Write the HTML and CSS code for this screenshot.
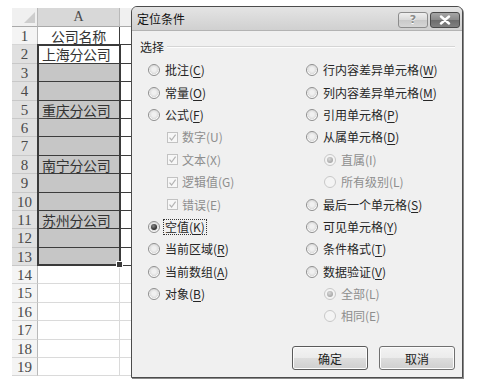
FILE: index.html
```html
<!DOCTYPE html>
<html lang="zh-CN">
<head>
<meta charset="utf-8">
<title>定位条件</title>
<link rel="stylesheet" href="styles.css">
</head>
<body>
<div class="screen">
  <div class="sheet">
    <div class="row hdr">
      <div class="rh corner"><i class="tri"></i></div>
      <div class="c a ch sel">A</div>
      <div class="c b ch"></div>
    </div>
    <div class="row"><div class="rh">1</div><div class="c a t center">公司名称</div><div class="c b t"></div></div>
    <div class="row"><div class="rh sel">2</div><div class="c a t">上海分公司</div><div class="c b t"></div></div>
    <div class="row"><div class="rh sel">3</div><div class="c a t fill"></div><div class="c b t"></div></div>
    <div class="row"><div class="rh sel">4</div><div class="c a t fill"></div><div class="c b t"></div></div>
    <div class="row"><div class="rh sel">5</div><div class="c a t fill">重庆分公司</div><div class="c b t"></div></div>
    <div class="row"><div class="rh sel">6</div><div class="c a t fill"></div><div class="c b t"></div></div>
    <div class="row"><div class="rh sel">7</div><div class="c a t fill"></div><div class="c b t"></div></div>
    <div class="row"><div class="rh sel">8</div><div class="c a t fill">南宁分公司</div><div class="c b t"></div></div>
    <div class="row"><div class="rh sel">9</div><div class="c a t fill"></div><div class="c b t"></div></div>
    <div class="row"><div class="rh sel">10</div><div class="c a t fill"></div><div class="c b t"></div></div>
    <div class="row"><div class="rh sel">11</div><div class="c a t fill">苏州分公司</div><div class="c b t"></div></div>
    <div class="row"><div class="rh sel">12</div><div class="c a t fill"></div><div class="c b t"></div></div>
    <div class="row"><div class="rh sel">13</div><div class="c a t fill"></div><div class="c b t"></div></div>
    <div class="row"><div class="rh">14</div><div class="c a"></div><div class="c b"></div></div>
    <div class="row"><div class="rh">15</div><div class="c a"></div><div class="c b"></div></div>
    <div class="row"><div class="rh">16</div><div class="c a"></div><div class="c b"></div></div>
    <div class="row"><div class="rh">17</div><div class="c a"></div><div class="c b"></div></div>
    <div class="row"><div class="rh">18</div><div class="c a"></div><div class="c b"></div></div>
    <div class="row"><div class="rh">19</div><div class="c a"></div><div class="c b"></div></div>
    <div class="selection"><i class="handle"></i></div>
  </div>

  <div class="dialog">
    <div class="titlebar">
      <span class="title">定位条件</span>
      <div class="tb-btns">
        <span class="tb help">?</span>
        <span class="tb close"><svg width="12" height="10" viewBox="0 0 12 10"><path d="M2 1.5 L10 8.5 M10 1.5 L2 8.5" stroke="#fff" stroke-width="2.4" stroke-linecap="round"/></svg></span>
      </div>
    </div>
    <div class="body">
      <div class="group-head"><span>选择</span><i class="rule"></i></div>
      <div class="options">
        <div class="col">
          <div class="opt"><i class="radio"></i><span>批注(<u>C</u>)</span></div>
          <div class="opt"><i class="radio"></i><span>常量(<u>O</u>)</span></div>
          <div class="opt"><i class="radio"></i><span>公式(<u>F</u>)</span></div>
          <div class="opt sub-chk dis"><i class="chk"><svg width="9" height="9" viewBox="0 0 9 9"><path d="M1.5 4.6 L3.6 7 L7.6 1.6" fill="none" stroke="#b4b4b4" stroke-width="1.2"/></svg></i><span>数字(U)</span></div>
          <div class="opt sub-chk dis"><i class="chk"><svg width="9" height="9" viewBox="0 0 9 9"><path d="M1.5 4.6 L3.6 7 L7.6 1.6" fill="none" stroke="#b4b4b4" stroke-width="1.2"/></svg></i><span>文本(X)</span></div>
          <div class="opt sub-chk dis"><i class="chk"><svg width="9" height="9" viewBox="0 0 9 9"><path d="M1.5 4.6 L3.6 7 L7.6 1.6" fill="none" stroke="#b4b4b4" stroke-width="1.2"/></svg></i><span>逻辑值(G)</span></div>
          <div class="opt sub-chk dis"><i class="chk"><svg width="9" height="9" viewBox="0 0 9 9"><path d="M1.5 4.6 L3.6 7 L7.6 1.6" fill="none" stroke="#b4b4b4" stroke-width="1.2"/></svg></i><span>错误(E)</span></div>
          <div class="opt"><i class="radio on"></i><span class="focus">空值(<u>K</u>)</span></div>
          <div class="opt"><i class="radio"></i><span>当前区域(<u>R</u>)</span></div>
          <div class="opt"><i class="radio"></i><span>当前数组(<u>A</u>)</span></div>
          <div class="opt"><i class="radio"></i><span>对象(<u>B</u>)</span></div>
        </div>
        <div class="col">
          <div class="opt"><i class="radio"></i><span>行内容差异单元格(<u>W</u>)</span></div>
          <div class="opt"><i class="radio"></i><span>列内容差异单元格(<u>M</u>)</span></div>
          <div class="opt"><i class="radio"></i><span>引用单元格(<u>P</u>)</span></div>
          <div class="opt"><i class="radio"></i><span>从属单元格(<u>D</u>)</span></div>
          <div class="opt sub-rad dis"><i class="radio on"></i><span>直属(I)</span></div>
          <div class="opt sub-rad dis"><i class="radio"></i><span>所有级别(L)</span></div>
          <div class="opt"><i class="radio"></i><span>最后一个单元格(<u>S</u>)</span></div>
          <div class="opt"><i class="radio"></i><span>可见单元格(<u>Y</u>)</span></div>
          <div class="opt"><i class="radio"></i><span>条件格式(<u>T</u>)</span></div>
          <div class="opt"><i class="radio"></i><span>数据验证(<u>V</u>)</span></div>
          <div class="opt sub-rad dis"><i class="radio on"></i><span>全部(L)</span></div>
          <div class="opt sub-rad dis"><i class="radio"></i><span>相同(E)</span></div>
        </div>
      </div>
      <div class="actions">
        <span class="btn default">确定</span>
        <span class="btn">取消</span>
      </div>
    </div>
  </div>
</div>
</body>
</html>
```

FILE: styles.css
```css
html, body {
  margin: 0;
  padding: 0;
  background: #ffffff;
}

.screen {
  position: relative;
  width: 502px;
  height: 388px;
  overflow: hidden;
}

/* ---------- spreadsheet ---------- */
.sheet {
  position: relative;
  margin: 8px 0 0 12px;
  width: 240px;
}

.row {
  display: flex;
  height: 18.4px;
}

.row.hdr {
  height: 19px;
}

.rh {
  box-sizing: border-box;
  width: 26px;
  flex: none;
  background: #f4f4f4;
  border-right: 1px solid #b9b9b9;
  border-bottom: 1px solid #d6d6d6;
  font-family: "Liberation Serif", "DejaVu Serif", serif;
  font-size: 15px;
  line-height: 18px;
  color: #4a4a4a;
  text-align: center;
}

.rh.sel {
  background: #e0e0e0;
  border-bottom-color: #c8c8c8;
}

.rh.corner {
  position: relative;
  background: #f0f0f0;
  border-bottom-color: #a9a9a9;
}

.tri {
  position: absolute;
  right: 2px;
  bottom: 3px;
  width: 0;
  height: 0;
  border-left: 11px solid transparent;
  border-bottom: 11px solid #cdcdcd;
}

.c {
  box-sizing: border-box;
  flex: none;
  border-right: 1px solid #dadada;
  border-bottom: 1px solid #dadada;
  font-family: "Noto Sans CJK SC", sans-serif;
  font-size: 14px;
  line-height: 18px;
  color: #333333;
  padding-left: 4px;
  white-space: nowrap;
  overflow: hidden;
  letter-spacing: -0.3px;
}

.c.a { width: 82px; }
.c.b { width: 120px; }

.c.ch {
  background: #f0f0f0;
  border-right-color: #b9b9b9;
  border-bottom-color: #a9a9a9;
  font-family: "Liberation Serif", "DejaVu Serif", serif;
  font-size: 14px;
  color: #4a4a4a;
  text-align: center;
  padding-left: 0;
}

.c.ch.sel {
  background: #d8d8d8;
}

.c.t {
  border-right-color: #3c3c3c;
  border-bottom-color: #3c3c3c;
}

.c.center {
  text-align: center;
  padding-left: 0;
}

.c.fill {
  background: #c6c6c6;
}

.selection {
  position: absolute;
  left: 25px;
  top: 36.4px;
  width: 84px;
  height: 222px;
  box-sizing: border-box;
  border: 2px solid #3a3a3a;
  pointer-events: none;
}

.handle {
  position: absolute;
  right: -4px;
  bottom: -4px;
  width: 5px;
  height: 5px;
  background: #3a3a3a;
  border: 1px solid #ffffff;
}

/* ---------- dialog ---------- */
.dialog {
  position: absolute;
  left: 131px;
  top: 6px;
  width: 332px;
  height: 372px;
  box-sizing: border-box;
  border: 1px solid #4c4c4c;
  border-radius: 6px 6px 0 0;
  background: #d2d2d2;
  display: flex;
  flex-direction: column;
  font-family: "Noto Sans CJK SC", sans-serif;
  font-size: 12px;
  color: #262626;
  box-shadow: 1px 1px 0 #8a8a8a;
}

.titlebar {
  height: 23px;
  flex: none;
  display: flex;
  justify-content: space-between;
  align-items: center;
  padding: 0 2px 0 5px;
  background: linear-gradient(#e4e4e4, #d0d0d0);
  border-radius: 5px 5px 0 0;
}

.title {
  color: #111;
  font-size: 12px;
  line-height: 14px;
}

.tb-btns {
  display: flex;
  gap: 2px;
  align-self: flex-start;
  margin-top: 5px;
}

.tb {
  box-sizing: border-box;
  width: 30px;
  height: 16px;
  border-radius: 3px;
  display: flex;
  align-items: center;
  justify-content: center;
}

.tb.help {
  border: 1px solid #8c8c8c;
  background: linear-gradient(#efefef, #d9d9d9 50%, #c9c9c9 51%, #d6d6d6);
  color: #8a8a8a;
  font-family: "DejaVu Sans", sans-serif;
  font-weight: bold;
  font-size: 11px;
  line-height: 14px;
  text-shadow: 0 1px 0 #fff;
}

.tb.close {
  border: 1px solid #4a4a4a;
  background: linear-gradient(#a6a6a6, #8a8a8a 50%, #6c6c6c 51%, #808080);
}

.body {
  flex: 1;
  display: flex;
  flex-direction: column;
  background: #f0f0f0;
  border-top: 1px solid #b3b3b3;
  padding: 9px 7px 7px 8px;
}

.group-head {
  display: flex;
  align-items: center;
  height: 14px;
  line-height: 14px;
  color: #262626;
}

.rule {
  flex: 1;
  height: 0;
  margin-left: 3px;
  margin-top: -1px;
  border-top: 1px solid #d5d5d5;
  border-bottom: 1px solid #fdfdfd;
}

.options {
  display: grid;
  grid-template-columns: 158px 1fr;
  margin-top: 5px;
  padding-left: 8px;
}

.opt {
  display: flex;
  align-items: center;
  gap: 5px;
  height: 22.4px;
  white-space: nowrap;
  line-height: 14px;
}

.opt u {
  text-underline-offset: 2px;
}

.opt.sub-chk {
  padding-left: 19px;
  gap: 4px;
}

.opt.sub-rad {
  padding-left: 18px;
}

.opt.dis {
  color: #8e8e8e;
}

.radio {
  position: relative;
  flex: none;
  box-sizing: border-box;
  width: 12px;
  height: 12px;
  border-radius: 50%;
  border: 1px solid #8f8f8f;
  background: radial-gradient(circle at 50% 45%, #f0f0f0 0 25%, #dcdcdc 60%, #f8f8f8 62%, #f8f8f8 100%);
}

.radio.on::after {
  content: "";
  position: absolute;
  left: 2px;
  top: 2px;
  width: 6px;
  height: 6px;
  border-radius: 50%;
  background: radial-gradient(circle at 40% 35%, #8a8a8a, #2a2a2a 70%);
}

.dis .radio {
  border-color: #c8c8c8;
  background: #f4f4f4;
}

.dis .radio.on::after {
  background: radial-gradient(circle at 40% 35%, #d8d8d8, #a8a8a8 70%);
}

.chk {
  flex: none;
  box-sizing: border-box;
  width: 11px;
  height: 11px;
  border: 1px solid #c2c2c2;
  background: #f7f7f7;
  display: flex;
  align-items: center;
  justify-content: center;
}

.chk svg {
  display: block;
}

.focus {
  border: 1px dotted #333;
  padding: 0 1px;
  margin-left: -2px;
}

.actions {
  margin-top: auto;
  display: flex;
  justify-content: flex-end;
  gap: 11px;
}

.btn {
  box-sizing: border-box;
  width: 76px;
  height: 24px;
  border: 1px solid #707070;
  border-radius: 3px;
  background: linear-gradient(#f3f3f3, #ebebeb 50%, #dddddd 51%, #cfcfcf);
  box-shadow: inset 0 0 0 1px #fcfcfc;
  display: flex;
  align-items: center;
  justify-content: center;
  color: #1c1c1c;
  font-size: 12px;
}

.btn.default {
  border-color: #5a5a5a;
}
```
